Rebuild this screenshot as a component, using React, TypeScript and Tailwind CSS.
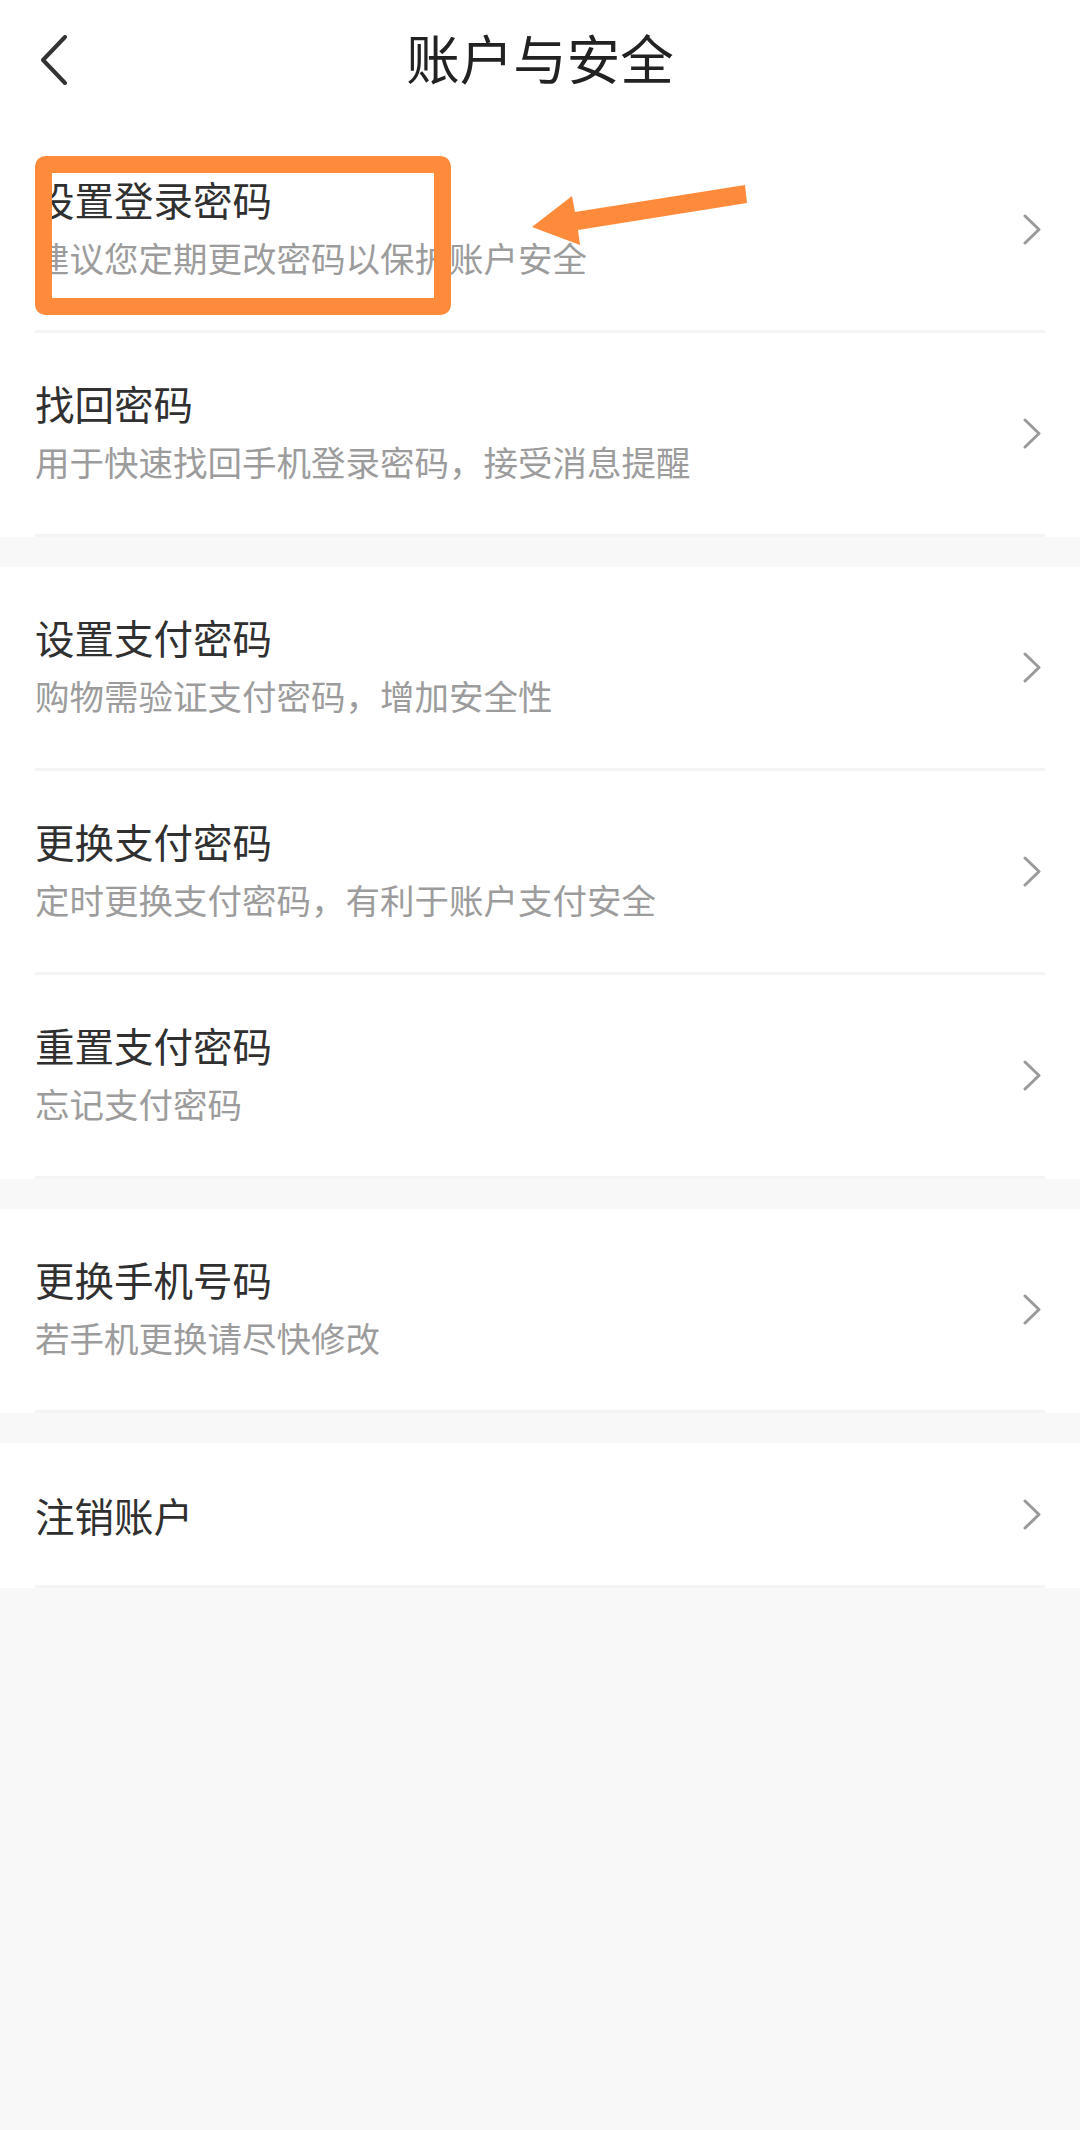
import React from "react";

type Item = { title: string; sub?: string };

const groups: Item[][] = [
  [
    { title: "设置登录密码", sub: "建议您定期更改密码以保护账户安全" },
    { title: "找回密码", sub: "用于快速找回手机登录密码，接受消息提醒" },
  ],
  [
    { title: "设置支付密码", sub: "购物需验证支付密码，增加安全性" },
    { title: "更换支付密码", sub: "定时更换支付密码，有利于账户支付安全" },
    { title: "重置支付密码", sub: "忘记支付密码" },
  ],
  [{ title: "更换手机号码", sub: "若手机更换请尽快修改" }],
  [{ title: "注销账户" }],
];

const font = { fontFamily: '"Noto Sans CJK SC", "Noto Sans", sans-serif' };

function Chevron() {
  return (
    <svg width="18" height="31" viewBox="0 0 18 31" className="shrink-0">
      <polyline
        points="2,2 16,15.5 2,29"
        fill="none"
        stroke="#9a9a9a"
        strokeWidth="3"
        strokeLinecap="round"
        strokeLinejoin="round"
      />
    </svg>
  );
}

function Row({ item }: { item: Item }) {
  if (!item.sub) {
    return (
      <div className="mx-[35px] h-[145px] border-b-[3px] border-[#f4f4f4] flex items-center justify-between pr-[4px]">
        <div className="text-[39.5px] leading-[47px] text-[#303030]">{item.title}</div>
        <Chevron />
      </div>
    );
  }
  return (
    <div className="mx-[35px] h-[204px] border-b-[3px] border-[#f4f4f4] flex items-center justify-between pr-[4px]">
      <div className="self-stretch flex flex-col pt-[46px]">
        <div className="text-[39.5px] leading-[47px] text-[#303030]">{item.title}</div>
        <div className="mt-[15px] text-[34.5px] leading-[41px] text-[#9c9c9c]">{item.sub}</div>
      </div>
      <Chevron />
    </div>
  );
}

export default function App() {
  return (
    <div className="relative w-[1080px] min-h-[2130px] bg-[#f8f8f8]" style={font}>
      <div className="bg-white h-[129px] grid grid-cols-[1fr_auto_1fr] items-start pt-[26px]">
        <div className="pl-[41px] pt-[9px]">
          <svg width="28" height="50" viewBox="0 0 28 50">
            <polyline
              points="24,2 2,25 24,48"
              fill="none"
              stroke="#333333"
              strokeWidth="4"
              strokeLinecap="round"
              strokeLinejoin="round"
            />
          </svg>
        </div>
        <div className="text-[53.5px] leading-[62px] text-[#222222]">账户与安全</div>
        <div />
      </div>
      <div className="flex flex-col gap-[30px]">
        {groups.map((g, gi) => (
          <div key={gi} className="bg-white">
            {g.map((it, ii) => (
              <Row key={ii} item={it} />
            ))}
          </div>
        ))}
      </div>
      <svg
        className="absolute top-0 left-0 pointer-events-none"
        width="1080"
        height="340"
        viewBox="0 0 1080 340"
      >
        <rect
          x="43.5"
          y="164.5"
          width="399"
          height="142"
          rx="2"
          fill="none"
          stroke="#fd8b3b"
          strokeWidth="17"
        />
        <polygon
          points="745,185 747,203 578,230 580,245 532,227 572,196 575,212"
          fill="#fd8b3b"
        />
      </svg>
    </div>
  );
}
